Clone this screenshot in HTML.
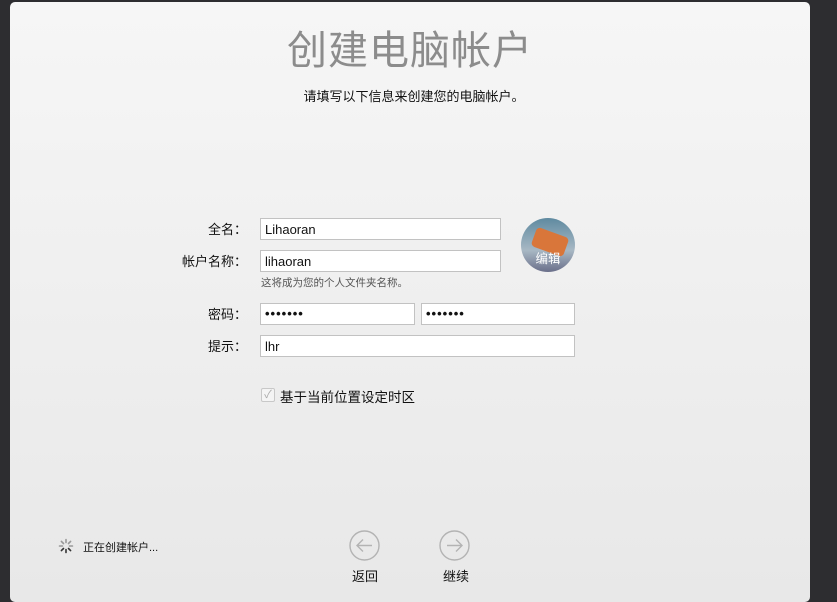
<!DOCTYPE html>
<html><head><meta charset="utf-8"><style>
body{margin:0;width:837px;height:590px;background:#2d2d30;position:relative;overflow:hidden;font-family:"Liberation Sans","Noto Sans CJK SC",sans-serif;}
.panel{position:absolute;left:10px;top:2px;width:800px;height:600px;background:linear-gradient(#f6f6f6,#e8e8e8);border-radius:5px;}
.a{position:absolute;white-space:nowrap;}
.in{position:absolute;background:#fff;border:1px solid #c2c2c2;box-sizing:border-box;font-size:13px;color:#111;padding-left:4px;line-height:21px;}
.lb{position:absolute;font-size:13px;color:#111;text-align:right;width:100px;}
.dots{font-size:13px;letter-spacing:1px;font-weight:bold;line-height:20px}
</style></head><body>
<div class="panel"></div>
<div class="a" style="left:0;width:820px;text-align:center;top:18px;font-size:40px;color:#8c8c8c;letter-spacing:1px">创建电脑帐户</div>
<div class="a" style="left:0;width:828px;text-align:center;top:86px;font-size:13px;color:#111">请填写以下信息来创建您的电脑帐户。</div>

<div class="lb" style="left:147px;top:219px">全名：</div>
<div class="in" style="left:260px;top:218px;width:241px;height:22px">Lihaoran</div>
<div class="lb" style="left:147px;top:251px">帐户名称：</div>
<div class="in" style="left:260px;top:250px;width:241px;height:22px">lihaoran</div>
<div class="a" style="left:261px;top:275px;font-size:10.5px;color:#555">这将成为您的个人文件夹名称。</div>
<div class="lb" style="left:147px;top:304px">密码：</div>
<div class="in dots" style="left:260px;top:303px;width:155px;height:22px">•••••••</div>
<div class="in dots" style="left:421px;top:303px;width:154px;height:22px">•••••••</div>
<div class="lb" style="left:147px;top:336px">提示：</div>
<div class="in" style="left:260px;top:335px;width:315px;height:22px">lhr</div>

<div class="a" style="left:521px;top:218px;width:54px;height:54px;border-radius:50%;overflow:hidden;background:linear-gradient(#5f8aa0,#a8b8c4 60%,#6a6f8a)">
<div style="position:absolute;left:12px;top:14px;width:34px;height:20px;background:#d9763a;transform:rotate(20deg);border-radius:4px"></div>
<div style="position:absolute;left:0;width:54px;top:30px;text-align:center;color:#fff;font-size:12.5px">编辑</div></div>

<div class="a" style="left:261px;top:388px;width:12px;height:12px;border:1px solid #c8c8c8;border-radius:2px;background:#f4f4f4;color:#aaa;font-size:11px;line-height:12px;text-align:center">✓</div>
<div class="a" style="left:280px;top:386px;font-size:13.5px;color:#111">基于当前位置设定时区</div>

<svg class="a" style="left:58px;top:538px" width="16" height="16" viewBox="0 0 16 16" stroke-width="1.6" stroke-linecap="round">
<g stroke="#999"><line x1="8" y1="1.5" x2="8" y2="4.5"/><line x1="12.6" y1="3.4" x2="10.5" y2="5.5"/><line x1="14.5" y1="8" x2="11.5" y2="8"/><line x1="3.4" y1="3.4" x2="5.5" y2="5.5"/><line x1="1.5" y1="8" x2="4.5" y2="8"/></g>
<g stroke="#333"><line x1="12.6" y1="12.6" x2="10.5" y2="10.5"/><line x1="8" y1="14.5" x2="8" y2="11.5"/><line x1="3.4" y1="12.6" x2="5.5" y2="10.5"/></g></svg>
<div class="a" style="left:83px;top:539px;font-size:11px;color:#111">正在创建帐户...</div>

<svg class="a" style="left:349px;top:530px" width="31" height="31" viewBox="0 0 31 31" fill="none" stroke="#b3b3b3" stroke-width="1.4"><circle cx="15.5" cy="15.5" r="14.5"/><path d="M23 15.5H8M14 9.5L8 15.5L14 21.5"/></svg>
<svg class="a" style="left:439px;top:530px" width="31" height="31" viewBox="0 0 31 31" fill="none" stroke="#b3b3b3" stroke-width="1.4"><circle cx="15.5" cy="15.5" r="14.5"/><path d="M8 15.5H23M17 9.5L23 15.5L17 21.5"/></svg>
<div class="a" style="left:352px;top:566px;font-size:13px;color:#111">返回</div>
<div class="a" style="left:443px;top:566px;font-size:13px;color:#111">继续</div>
</body></html>
